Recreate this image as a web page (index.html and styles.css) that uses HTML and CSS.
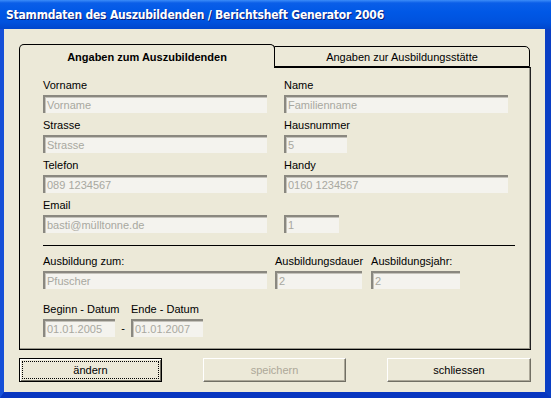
FILE: index.html
```html
<!DOCTYPE html>
<html lang="de">
<head>
    <meta charset="UTF-8">
    <title>Stammdaten des Auszubildenden</title>
    <link rel="stylesheet" href="styles.css">
</head>
<body>
    <div class="window">
        <div class="titlebar">Stammdaten des Auszubildenden / Berichtsheft Generator 2006</div>
        <div class="client">
            <div class="tabs">
                <div class="tab active">Angaben zum Auszubildenden</div>
                <div class="tab">Angaben zur Ausbildungsstätte</div>
            </div>
            <div class="panel">
                <div class="grid">
                    <div class="field">
                        <label>Vorname</label>
                        <div class="input w-wide">Vorname</div>
                    </div>
                    <div class="field">
                        <label>Name</label>
                        <div class="input w-wide">Familienname</div>
                    </div>
                    <div class="field">
                        <label>Strasse</label>
                        <div class="input w-wide">Strasse</div>
                    </div>
                    <div class="field">
                        <label>Hausnummer</label>
                        <div class="input w-nr">5</div>
                    </div>
                    <div class="field">
                        <label>Telefon</label>
                        <div class="input w-wide">089 1234567</div>
                    </div>
                    <div class="field">
                        <label>Handy</label>
                        <div class="input w-wide">0160 1234567</div>
                    </div>
                    <div class="field">
                        <label>Email</label>
                        <div class="input w-wide">basti@mülltonne.de</div>
                    </div>
                    <div class="field">
                        <label>&nbsp;</label>
                        <div class="input w-small">1</div>
                    </div>
                </div>

                <div class="separator"></div>

                <div class="row">
                    <div class="field">
                        <label>Ausbildung zum:</label>
                        <div class="input w-wide">Pfuscher</div>
                    </div>
                    <div class="field">
                        <label>Ausbildungsdauer</label>
                        <div class="input w-dauer">2</div>
                    </div>
                    <div class="field">
                        <label>Ausbildungsjahr:</label>
                        <div class="input w-jahr">2</div>
                    </div>
                </div>

                <div class="row dates">
                    <div class="field date">
                        <label>Beginn - Datum</label>
                        <div class="input w-date">01.01.2005</div>
                    </div>
                    <span class="dash">-</span>
                    <div class="field date">
                        <label>Ende - Datum</label>
                        <div class="input w-date">01.01.2007</div>
                    </div>
                </div>
            </div>

            <div class="buttons">
                <button class="btn default"><span>ändern</span></button>
                <button class="btn" disabled><span>speichern</span></button>
                <button class="btn wide"><span>schliessen</span></button>
            </div>
        </div>
    </div>
</body>
</html>
```

FILE: styles.css
```css
* {
    box-sizing: border-box;
}
body {
    margin: 0;
    font-family: "Liberation Sans", Arial, sans-serif;
    font-size: 11px;
    color: #000;
    background: #ece9d8;
}
.window {
    width: 551px;
    height: 398px;
    display: flex;
    flex-direction: column;
    background: #0a3fd0;
    border-left: 4px solid #1650d8;
    border-right: 6px solid #0a3fc4;
    border-bottom: 6px solid #0836c0;
}
.titlebar {
    height: 29px;
    margin-left: -4px;
    margin-right: -6px;
    padding: 0 0 0 6px;
    line-height: 30px;
    color: #fff;
    font-family: "DejaVu Sans Condensed", "DejaVu Sans", sans-serif;
    font-weight: bold;
    font-size: 12px;
    letter-spacing: -0.2px;
    text-shadow: 1px 1px 0 #0a1f7a;
    background: linear-gradient(#3c8cf8 0, #0a5ee8 3px, #0058e6 12px, #0052de 22px, #0046cc 29px);
}
.client {
    flex: 1;
    background: #ece9d8;
    padding: 15px 14px 0 15px;
}

/* tabs */
.tabs {
    display: flex;
    align-items: flex-end;
    height: 23px;
    position: relative;
    z-index: 1;
}
.tab {
    border: 1px solid #000;
    border-bottom: none;
    border-radius: 5px 5px 0 0;
    background: #ece9d8;
    text-align: center;
}
.tab.active {
    width: 256px;
    height: 24px;
    line-height: 24px;
    font-weight: bold;
    margin-bottom: -1px;
}
.tab:not(.active) {
    width: 256px;
    height: 21px;
    line-height: 20px;
    margin-left: -1px;
    border-bottom: 1px solid #000;
    border-radius: 0 5px 0 0;
}
.panel {
    height: 283px;
    border: 1px solid #000;
    border-right-color: #222;
    box-shadow: inset -1px -1px 0 #9a988c;
    padding: 10px 0 0 23px;
}

/* fields */
.grid {
    display: grid;
    grid-template-columns: 224px 223px;
    column-gap: 17px;
    row-gap: 5px;
}
.field {
    display: flex;
    flex-direction: column;
}
.field label {
    height: 14px;
    line-height: 14px;
    margin-bottom: 3px;
    white-space: nowrap;
}
.field.date {
    width: 72px;
}
.input {
    height: 18px;
    line-height: 17px;
    padding: 0 0 0 2px;
    color: #a8a8a0;
    background: #f4f3ee;
    border-top: 2px solid #8a8880;
    border-left: 2px solid #8a8880;
    box-shadow: inset 1px 1px 0 #c4c2ba;
    white-space: nowrap;
    overflow: hidden;
}
.w-wide { width: 224px; }
.w-nr { width: 63px; }
.w-small { width: 55px; }
.w-dauer { width: 87px; }
.w-jahr { width: 89px; }
.w-date { width: 72px; }

.separator {
    width: 472px;
    height: 1px;
    background: #000;
    margin: 12px 0 8px;
}
.row {
    display: flex;
    gap: 8px;
}
.row.dates {
    margin-top: 13px;
    gap: 0;
    align-items: flex-end;
}
.dash {
    width: 16px;
    text-align: center;
    line-height: 18px;
    height: 18px;
    padding-bottom: 2px;
}

/* buttons */
.buttons {
    display: flex;
    justify-content: space-between;
    margin-top: 8px;
    width: 512px;
}
.btn {
    width: 143px;
    height: 24px;
    padding: 0;
    font-family: "Liberation Sans", Arial, sans-serif;
    font-size: 11px;
    color: #000;
    background: #ece9d8;
    border: 1px solid;
    border-color: #fff #716f64 #716f64 #fff;
    box-shadow: inset -1px -1px 0 #aca899;
}
.btn.wide {
    width: 144px;
}
.btn span {
    display: block;
    margin: 2px;
    height: 18px;
    line-height: 18px;
}
.btn.default {
    border: 1px solid #000;
    box-shadow: inset 1px 1px 0 #fff, inset -1px -1px 0 #716f64;
}
.btn.default span {
    border: 1px dotted #000;
    line-height: 16px;
}
.btn:disabled {
    color: #aca899;
}
```
